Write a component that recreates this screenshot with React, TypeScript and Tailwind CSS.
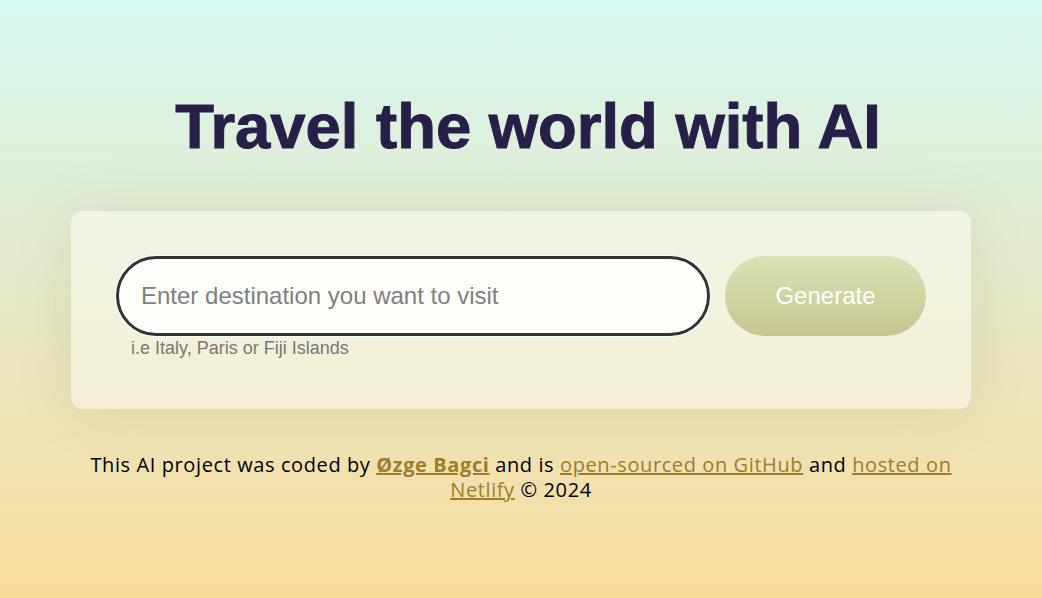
import React from "react";

export default function App() {
  return (
    <div className="min-h-[598px] w-full bg-gradient-to-b from-[#d6f8f1] via-[#e6e8c8] to-[#f8dc9c] pt-[88px] pb-[80px]">
      <div className="mx-auto w-[900px]">
        <h1
          className="pl-[14px] text-center text-[63.4px] leading-[76px] font-bold text-[#261f47] [-webkit-text-stroke:1px_#261f47]"
          style={{ fontFamily: '"Liberation Sans", Arial, sans-serif' }}
        >
          Travel the world with AI
        </h1>
        <div className="mt-[47px] rounded-[12px] bg-gradient-to-b from-[#eff5e5] to-[#f5efd5] px-[45px] pt-[45px] pb-[50px] shadow-[0_0_60px_rgba(120,110,40,0.12)]">
          <div className="flex gap-[15px]">
            <div className="flex flex-col">
              <input
                type="text"
                placeholder="Enter destination you want to visit"
                className="h-[80px] w-[594px] rounded-full border-[3px] border-[#333] bg-[#fdfef9] px-[22px] text-[24px] text-[#333] placeholder:text-[#808080] outline-none ring-1 ring-white"
                style={{ fontFamily: '"Liberation Sans", Arial, sans-serif' }}
              />
              <span
                className="mt-[1px] pl-[15px] text-[18px] leading-[22px] text-[#777]"
                style={{ fontFamily: '"Liberation Sans", Arial, sans-serif' }}
              >
                i.e Italy, Paris or Fiji Islands
              </span>
            </div>
            <button
              className="h-[80px] w-[201px] rounded-full bg-gradient-to-b from-[#d8e3b4] to-[#c9c592] text-[24px] text-white"
              style={{ fontFamily: '"Liberation Sans", Arial, sans-serif' }}
            >
              Generate
            </button>
          </div>
        </div>
        <p
          className="mt-[43px] px-[10px] text-center text-[20px] leading-[25px] tracking-[0.6px] text-black"
          style={{ fontFamily: '"Open Sans", "Noto Sans", sans-serif' }}
        >
          This AI project was coded by{" "}
          <a href="#" className="font-bold text-[#a07c2b] underline">
            Øzge Bagci
          </a>{" "}
          and is{" "}
          <a href="#" className="text-[#a07c2b] underline">
            open-sourced on GitHub
          </a>{" "}
          and{" "}
          <a href="#" className="text-[#a07c2b] underline">
            hosted on Netlify
          </a>{" "}
          © 2024
        </p>
      </div>
    </div>
  );
}
